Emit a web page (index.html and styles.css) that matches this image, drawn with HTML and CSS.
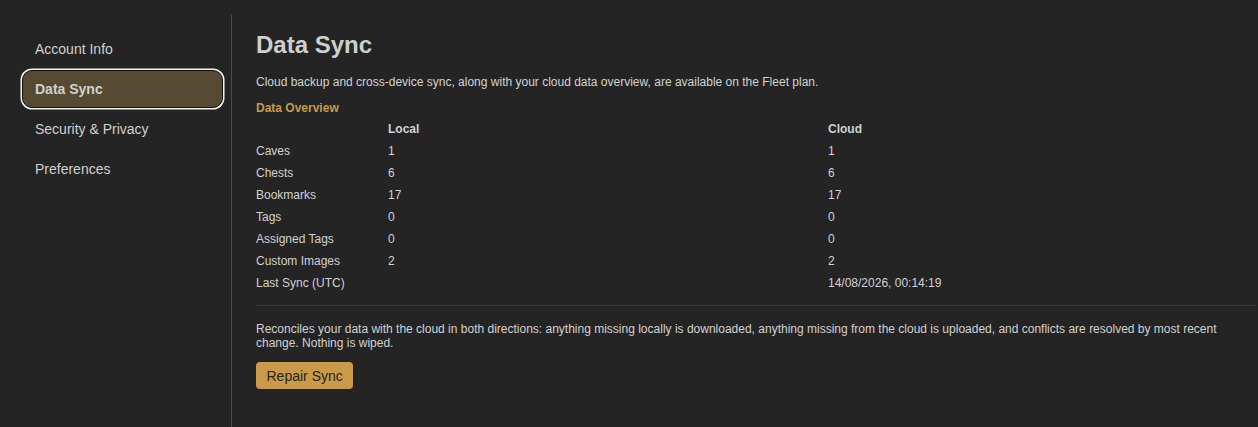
FILE: index.html
```html
<!DOCTYPE html>
<html>
<head>
<meta charset="utf-8">
<link rel="stylesheet" href="styles.css">
</head>
<body>
<div class="layout">
  <nav class="sidebar">
    <div class="nav-item">Account Info</div>
    <div class="nav-item active">Data Sync</div>
    <div class="nav-item">Security &amp; Privacy</div>
    <div class="nav-item">Preferences</div>
  </nav>
  <main class="main">
    <h1 class="title">Data Sync</h1>
    <p class="intro">Cloud backup and cross-device sync, along with your cloud data overview, are available on the Fleet plan.</p>
    <div class="section-label">Data Overview</div>
    <div class="table">
      <div class="th"></div><div class="th">Local</div><div class="th">Cloud</div>
      <div>Caves</div><div>1</div><div>1</div>
      <div>Chests</div><div>6</div><div>6</div>
      <div>Bookmarks</div><div>17</div><div>17</div>
      <div>Tags</div><div>0</div><div>0</div>
      <div>Assigned Tags</div><div>0</div><div>0</div>
      <div>Custom Images</div><div>2</div><div>2</div>
      <div>Last Sync (UTC)</div><div></div><div>14/08/2026, 00:14:19</div>
    </div>
    <div class="divider"></div>
    <p class="desc">Reconciles your data with the cloud in both directions: anything missing locally is downloaded, anything missing from the cloud is uploaded, and conflicts are resolved by most recent change. Nothing is wiped.</p>
    <button class="btn">Repair Sync</button>
  </main>
</div>
</body>
</html>
```
FILE: styles.css
```css
html, body {
  margin: 0;
  padding: 0;
  background: #242424;
  height: 100%;
}
body {
  font-family: "Liberation Sans", Arial, sans-serif;
  color: #d2d2d2;
  overflow: hidden;
}
.layout {
  display: flex;
  margin-top: 15px;
  min-height: 412px;
}
.sidebar {
  width: 201px;
  flex: none;
  padding: 15px 8px 0 22px;
  border-right: 1px solid #5a4a30;
  display: flex;
  flex-direction: column;
  gap: 2px;
}
.nav-item {
  height: 38px;
  box-sizing: border-box;
  display: flex;
  align-items: center;
  padding-left: 13px;
  font-size: 14px;
  color: #d0d0d0;
  border-radius: 10px;
}
.nav-item.active {
  background: #574a33;
  font-weight: bold;
  border: 1px solid #111;
  box-shadow: 0 0 0 1.5px #f2f2f2;
  padding-left: 12px;
}
.main {
  flex: 1;
  padding: 0 2px 0 24px;
}
.title {
  margin: 16px 0 0;
  font-size: 24px;
  line-height: 28px;
  font-weight: bold;
  color: #cfcfcf;
}
.intro {
  margin: 16px 0 0;
  font-size: 12px;
  line-height: 14px;
}
.section-label {
  margin-top: 12px;
  font-size: 12px;
  line-height: 14px;
  font-weight: bold;
  color: #c89a4a;
}
.table {
  display: grid;
  grid-template-columns: 132px 440px 1fr;
  grid-auto-rows: 22px;
  font-size: 12px;
  margin-top: 3px;
}
.table > div {
  display: flex;
  align-items: center;
}
.table .th {
  font-weight: bold;
}
.divider {
  height: 1px;
  background: #383838;
  margin-top: 11px;
}
.desc {
  margin: 16px 0 0;
  font-size: 12px;
  line-height: 14px;
}
.btn {
  margin-top: 12px;
  background: #c89a4a;
  color: #2a2418;
  border: none;
  border-radius: 4px;
  font-family: "Liberation Sans", Arial, sans-serif;
  font-size: 14px;
  height: 27px;
  padding: 0 10.5px;
}
```
